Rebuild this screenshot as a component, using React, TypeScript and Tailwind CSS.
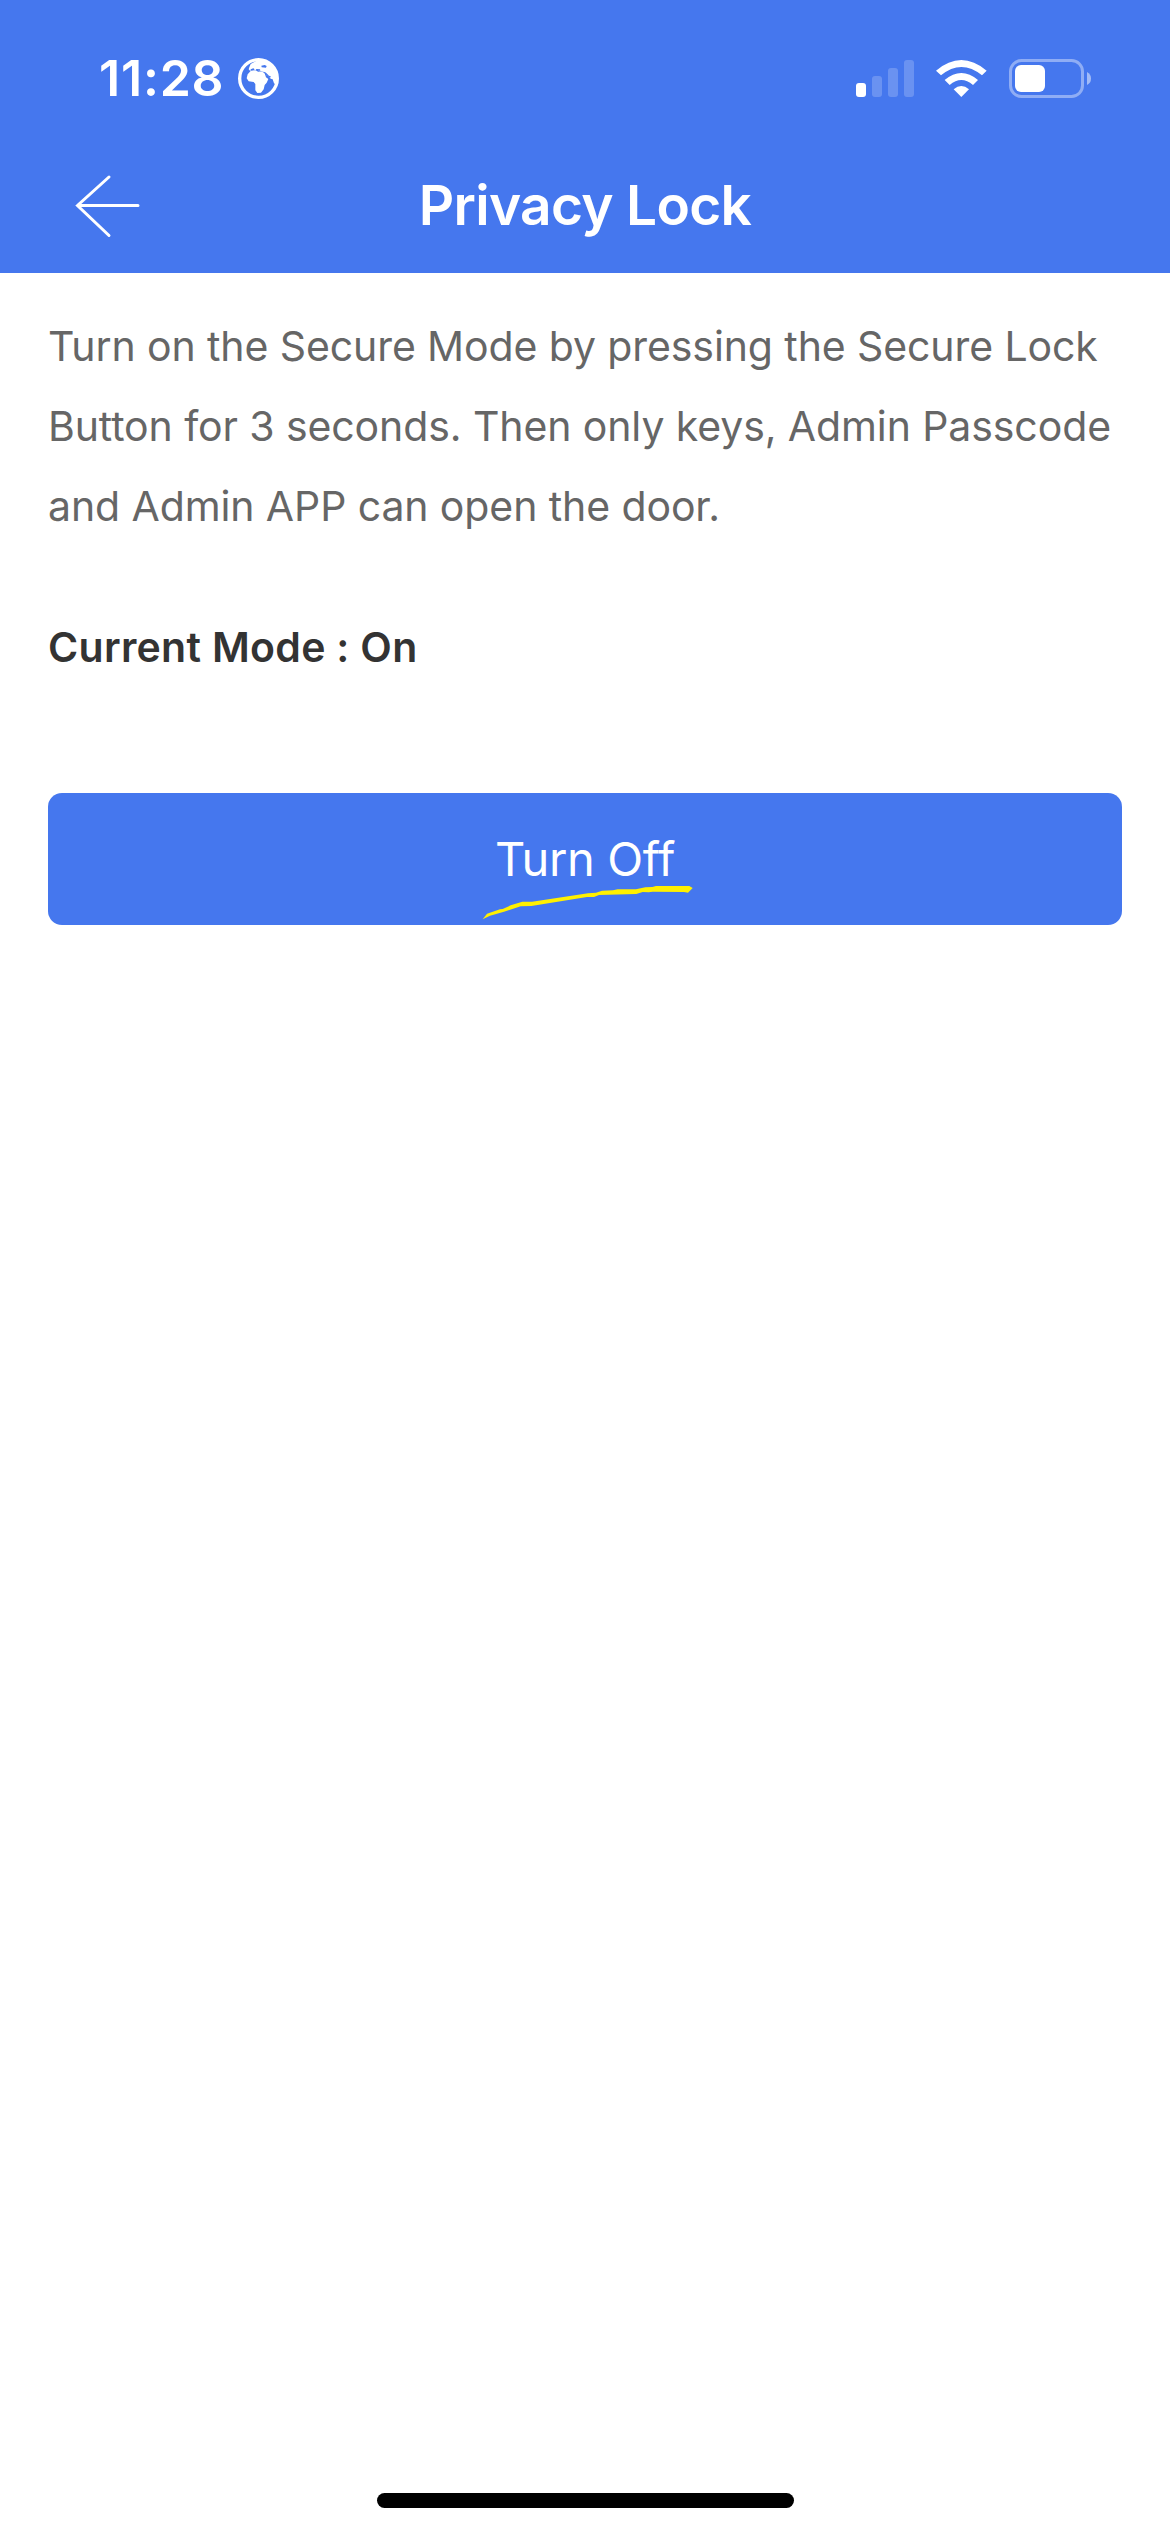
import type { ReactNode } from "react"

const description = [
  "Turn on the Secure Mode by pressing the Secure Lock",
  "Button for 3 seconds. Then only keys, Admin Passcode",
  "and Admin APP can open the door.",
]

function GlobeIcon() {
  return (
    <svg width="41" height="41" viewBox="0 0 123 123" className="ml-[14px]">
      <circle cx="61.5" cy="61.5" r="56.5" fill="none" stroke="white" strokeWidth="10" />
      {/* Europe and Asia */}
      <path
        fill="white"
        d="M38 18 L60 6 L90 10 L114 40 L116 82 L108 76 L104 64 L98 62 L94 56 L86 52 L80 42 L62 40 L58 34 L46 38 L36 38 L32 34 L34 28 Z"
      />
      {/* Africa */}
      <path
        fill="white"
        d="M38 39 L54 37 L60 41 L74 42 L80 46 L84 58 L91 63 L86 74 L80 81 L77 94 L69 104 L58 105 L52 97 L52 78 L47 72 L32 70 L26 61 L29 49 Z"
      />
      {/* Seas */}
      <path fill="#4577ee" d="M38 34 L46 31 L50 34 L47 37 L38 38 Z M54 33 L66 34 L67 38 L56 38 Z M70 23 L80 21 L86 24 L84 29 L71 28 Z" />
      <path fill="none" stroke="#4577ee" strokeWidth="4" d="M81 44 L91 54 L98 57" />
    </svg>
  )
}

function SignalIcon() {
  return (
    <svg width="58" height="37" viewBox="0 0 58 37" fill="white">
      <rect x="0" y="23" width="10" height="14" rx="3" />
      <rect x="16" y="16" width="10" height="21" rx="3" opacity="0.2" />
      <rect x="32" y="8" width="10" height="29" rx="3" opacity="0.2" />
      <rect x="48" y="0" width="10" height="37" rx="3" opacity="0.2" />
    </svg>
  )
}

function WifiIcon() {
  return (
    <svg width="51" height="37" viewBox="0 0 153 111" fill="white" className="ml-[22px]">
      <path d="M0 32 Q76 -32 152 32 L138 46 Q76 -4 15 46 Z" />
      <path d="M26 60 Q76 18 126 60 L111 75 Q76 45 41 75 Z" />
      <path d="M53 88 Q76 68 99 88 L76 111 Z" />
    </svg>
  )
}

function BatteryIcon() {
  return (
    <svg width="83" height="39" viewBox="0 0 83 39" className="ml-[22px]">
      <rect x="1.5" y="1.5" width="72" height="36" rx="11" fill="none" stroke="white" strokeWidth="3" opacity="0.4" />
      <rect x="6" y="6" width="30" height="27" rx="6" fill="white" />
      <path d="M78 13 Q82 15 82 19.5 Q82 24 78 26 Z" fill="white" opacity="0.5" />
    </svg>
  )
}

function StatusBar() {
  return (
    <div className="flex h-[156px] items-center justify-between pr-[78px] pl-[99px]">
      <div className="flex items-center">
        <span className="text-[50px] leading-none font-semibold tracking-[0.8px]">11:28</span>
        <GlobeIcon />
      </div>
      <div className="flex items-center">
        <SignalIcon />
        <WifiIcon />
        <BatteryIcon />
      </div>
    </div>
  )
}

function NavBar({ children }: { children: ReactNode }) {
  return (
    <div className="grid h-[117px] grid-cols-[1fr_auto_1fr] items-start px-[75px]">
      <button aria-label="Back" className="mt-[18px] w-[66px]">
        <svg width="66" height="64" viewBox="0 0 66 64" fill="none" stroke="white" strokeWidth="3" strokeLinecap="round">
          <path d="M34 3 L2.5 31.5 L34 61.5 M2.5 31.5 H63" />
        </svg>
      </button>
      <h1 className="mt-[14px] text-[55px] leading-[70px] font-semibold tracking-[-0.7px]">{children}</h1>
    </div>
  )
}

export default function App() {
  return (
    <div className="flex h-[2532px] w-[1170px] flex-col bg-white font-['Inter',sans-serif]">
      <header className="h-[273px] bg-[#4577ee] text-white">
        <StatusBar />
        <NavBar>Privacy Lock</NavBar>
      </header>

      <main className="flex-1 px-12 pt-[33px]">
        <div className="text-[41px] leading-[80px] tracking-[-0.1px] whitespace-nowrap text-[#666666]">
          {description.map((line) => (
            <p key={line}>{line}</p>
          ))}
        </div>

        <p className="mt-[61px] text-[41px] leading-[80px] font-semibold tracking-[0.3px] text-[#333333]">
          Current Mode : On
        </p>

        <button className="relative mt-[106px] flex h-[132px] w-full items-center justify-center rounded-[14px] bg-[#4577ee] text-white">
          <span className="text-[47px] font-normal tracking-[-0.4px]">Turn Off</span>
          {/* Hand-drawn marker stroke under the label */}
          <svg
            className="absolute top-[93px] left-[434px]"
            width="212"
            height="34"
            viewBox="0 0 636 102"
            fill="#fff000"
          >
            <path d="M2 100 L15 83 L54 70 L62 69 L86 58 L121 47 L150 47 L318 22 L342 20 L360 14 L393 13 L407 10 L462 10 L490 4 L511 3 L522 0 L622 0 L632 6 L618 20 L606 18 L512 17 L500 19 L482 18 L463 24 L351 27 L336 33 L315 33 L148 60 L116 61 L66 77 L24 89 Z" />
          </svg>
        </button>
      </main>

      <footer className="flex h-[39px] justify-center">
        <div className="h-[15px] w-[417px] rounded-full bg-black" />
      </footer>
    </div>
  )
}
